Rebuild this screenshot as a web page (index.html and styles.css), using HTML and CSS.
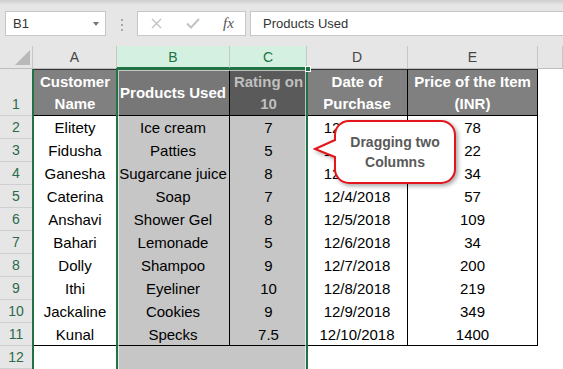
FILE: index.html
```html
<!DOCTYPE html>
<html lang="en">
<head>
    <meta charset="UTF-8">
    <meta name="viewport" content="width=device-width, initial-scale=1.0">
    <title>Dragging two columns</title>
    <link rel="stylesheet" href="styles.css">
</head>
<body>
    <!-- Formula bar -->
    <div class="formula-bar">
        <div class="name-box">
            <span>B1</span>
            <span class="drop-arrow"></span>
        </div>
        <div class="grip"><i></i><i></i><i></i></div>
        <div class="fx-buttons">
            <svg class="btn-cancel" width="11" height="11" viewBox="0 0 11 11">
                <path d="M1 1 L10 10 M10 1 L1 10" stroke="#c3c3c3" stroke-width="1.4" fill="none"/>
            </svg>
            <svg class="btn-enter" width="14" height="11" viewBox="0 0 14 11">
                <path d="M1 5.5 L5 9.5 L13 1" stroke="#c3c3c3" stroke-width="2" fill="none"/>
            </svg>
            <span class="fx">fx</span>
        </div>
        <div class="formula-input">Products Used</div>
    </div>

    <!-- Sheet -->
    <div class="sheet">
        <div class="grid">
            <div class="corner">
                <svg width="33" height="23" viewBox="0 0 33 23"><polygon points="30,4 30,19 15,19" fill="#b9b9b9"/></svg>
            </div>
            <div class="ch">A</div>
            <div class="ch sel">B</div>
            <div class="ch sel">C</div>
            <div class="ch">D</div>
            <div class="ch">E</div>
            <div class="ch"></div>

            <div class="rh tall">1</div>
            <div class="c h">Customer<br>Name</div>
            <div class="c h s br">Products Used</div>
            <div class="c h dim">Rating on<br>10</div>
            <div class="c h br">Date of<br>Purchase</div>
            <div class="c h br">Price of the Item<br>(INR)</div>
            <div class="c"></div>

            <div class="rh">2</div>
            <div class="c">Elitety</div>
            <div class="c s br">Ice cream</div>
            <div class="c s">7</div>
            <div class="c br">12/1/2018</div>
            <div class="c br">78</div>
            <div class="c"></div>

            <div class="rh">3</div>
            <div class="c">Fidusha</div>
            <div class="c s br">Patties</div>
            <div class="c s">5</div>
            <div class="c br">12/2/2018</div>
            <div class="c br">22</div>
            <div class="c"></div>

            <div class="rh">4</div>
            <div class="c">Ganesha</div>
            <div class="c s br">Sugarcane juice</div>
            <div class="c s">8</div>
            <div class="c br">12/3/2018</div>
            <div class="c br">34</div>
            <div class="c"></div>

            <div class="rh">5</div>
            <div class="c">Caterina</div>
            <div class="c s br">Soap</div>
            <div class="c s">7</div>
            <div class="c br">12/4/2018</div>
            <div class="c br">57</div>
            <div class="c"></div>

            <div class="rh">6</div>
            <div class="c">Anshavi</div>
            <div class="c s br">Shower Gel</div>
            <div class="c s">8</div>
            <div class="c br">12/5/2018</div>
            <div class="c br">109</div>
            <div class="c"></div>

            <div class="rh">7</div>
            <div class="c">Bahari</div>
            <div class="c s br">Lemonade</div>
            <div class="c s">5</div>
            <div class="c br">12/6/2018</div>
            <div class="c br">34</div>
            <div class="c"></div>

            <div class="rh">8</div>
            <div class="c">Dolly</div>
            <div class="c s br">Shampoo</div>
            <div class="c s">9</div>
            <div class="c br">12/7/2018</div>
            <div class="c br">200</div>
            <div class="c"></div>

            <div class="rh">9</div>
            <div class="c">Ithi</div>
            <div class="c s br">Eyeliner</div>
            <div class="c s">10</div>
            <div class="c br">12/8/2018</div>
            <div class="c br">219</div>
            <div class="c"></div>

            <div class="rh">10</div>
            <div class="c">Jackaline</div>
            <div class="c s br">Cookies</div>
            <div class="c s">9</div>
            <div class="c br">12/9/2018</div>
            <div class="c br">349</div>
            <div class="c"></div>

            <div class="rh">11</div>
            <div class="c bb">Kunal</div>
            <div class="c s br bb">Specks</div>
            <div class="c s bb">7.5</div>
            <div class="c br bb">12/10/2018</div>
            <div class="c br bb">1400</div>
            <div class="c"></div>

            <div class="rh">12</div>
            <div class="c"></div>
            <div class="c s"></div>
            <div class="c s"></div>
            <div class="c"></div>
            <div class="c"></div>
            <div class="c"></div>
        </div>

        <!-- drag insertion line and selected range -->
        <div class="drag-line"></div>
        <div class="selection"><span class="handle"></span></div>

        <!-- Callout -->
        <div class="callout">
            <svg width="148" height="74" viewBox="0 0 148 74">
                <path d="M36 4 H128 A14 14 0 0 1 142 18 V52 A14 14 0 0 1 128 66 H36 A14 14 0 0 1 22 52 V40 L2 32 L22 23 V18 A14 14 0 0 1 36 4 Z"
                      fill="#fff" stroke="#e3161c" stroke-width="2"/>
            </svg>
            <p class="callout-text">Dragging two<br>Columns</p>
        </div>
    </div>
</body>
</html>
```

FILE: styles.css
```css
* {
    box-sizing: border-box;
}

body {
    margin: 0;
    width: 563px;
    height: 369px;
    overflow: hidden;
    font-family: "Liberation Sans", Arial, sans-serif;
    background: #fff;
}

/* Formula bar */
.formula-bar {
    height: 46px;
    display: flex;
    align-items: flex-start;
    padding: 11px 0 0 5px;
    background: linear-gradient(#cfcfcf, #e6e6e6 5px);
}

.name-box {
    width: 101px;
    height: 25px;
    display: flex;
    align-items: center;
    justify-content: space-between;
    padding: 0 6px 0 7px;
    background: #fff;
    border: 1px solid #c6c6c6;
    font-size: 13px;
    color: #333;
}

.drop-arrow {
    width: 0;
    height: 0;
    border-left: 3.5px solid transparent;
    border-right: 3.5px solid transparent;
    border-top: 4px solid #777;
}

.grip {
    width: 31px;
    display: flex;
    flex-direction: column;
    align-items: center;
    gap: 3px;
    padding-top: 8px;
}

.grip i {
    width: 2px;
    height: 2px;
    background: #a8a8a8;
}

.fx-buttons {
    width: 109px;
    height: 25px;
    display: flex;
    align-items: center;
    background: #fff;
    border: 1px solid #c6c6c6;
}

.btn-cancel {
    margin-left: 13px;
}

.btn-enter {
    margin-left: 24px;
}

.fx {
    margin-left: 23px;
    font-family: "Liberation Serif", "Times New Roman", serif;
    font-style: italic;
    font-size: 15px;
    color: #555;
}

.formula-input {
    flex: 1;
    height: 25px;
    margin-left: 4px;
    padding-left: 12px;
    background: #fff;
    border: 1px solid #c6c6c6;
    border-right: none;
    font-size: 13px;
    line-height: 23px;
    color: #333;
}

/* Sheet */
.sheet {
    position: relative;
    height: 323px;
    overflow: hidden;
}

.grid {
    display: grid;
    grid-template-columns: 33px 84px 113px 77px 101px 130px 1fr;
    grid-template-rows: 23px 47px repeat(11, 23px);
}

.corner {
    background: #e6e6e6;
    border-right: 1px solid #c6c6c6;
    border-bottom: 1px solid #bdbdbd;
}

.corner svg {
    display: block;
}

.ch {
    background: #e6e6e6;
    border-right: 1px solid #c6c6c6;
    border-bottom: 1px solid #bdbdbd;
    text-align: center;
    font-size: 14px;
    line-height: 22px;
    color: #444;
}

.ch.sel {
    background: #d3f0e0;
    color: #217346;
    border-bottom: 2px solid #217346;
}

.rh {
    background: #e6e6e6;
    border-right: 1px solid #c6c6c6;
    border-bottom: 1px solid #cfcfcf;
    text-align: center;
    font-size: 14px;
    line-height: 22px;
    color: #2b6a4c;
}

.rh.tall {
    display: flex;
    align-items: flex-end;
    justify-content: center;
}

.c {
    font-size: 15px;
    line-height: 23px;
    text-align: center;
    white-space: nowrap;
    color: #000;
    background: #fff;
}

.c.s {
    background: #c6c6c6;
}

.c.h {
    display: flex;
    align-items: center;
    justify-content: center;
    line-height: 22px;
    font-weight: bold;
    color: #fff;
    background: #808080;
    border-top: 1px solid #333;
    border-bottom: 1px solid #000;
}

.c.h.s {
    background: #777;
}

.c.h.dim {
    background: #5a5a5a;
    color: #bfbfbf;
}

.br {
    border-right: 1px solid #000;
}

.bb {
    border-bottom: 1px solid #000;
}

/* Overlays */
.drag-line {
    position: absolute;
    left: 32px;
    top: 23px;
    width: 2px;
    height: 300px;
    background: #217346;
}

.selection {
    position: absolute;
    left: 116px;
    top: 22px;
    width: 192px;
    height: 320px;
    border: 2px solid #217346;
    box-shadow: inset 0 0 0 1px rgba(255, 255, 255, 0.6);
}

.handle {
    position: absolute;
    right: -5px;
    top: -4px;
    width: 6px;
    height: 6px;
    background: #217346;
    border: 1px solid #fff;
}

.callout {
    position: absolute;
    left: 313px;
    top: 71px;
    width: 148px;
    height: 74px;
}

.callout svg {
    display: block;
    filter: drop-shadow(2px 2px 2px rgba(0, 0, 0, 0.35));
}

.callout-text {
    position: absolute;
    left: 22px;
    top: 15px;
    width: 120px;
    margin: 0;
    text-align: center;
    font-size: 14px;
    line-height: 20px;
    font-weight: bold;
    color: #595959;
}
```
